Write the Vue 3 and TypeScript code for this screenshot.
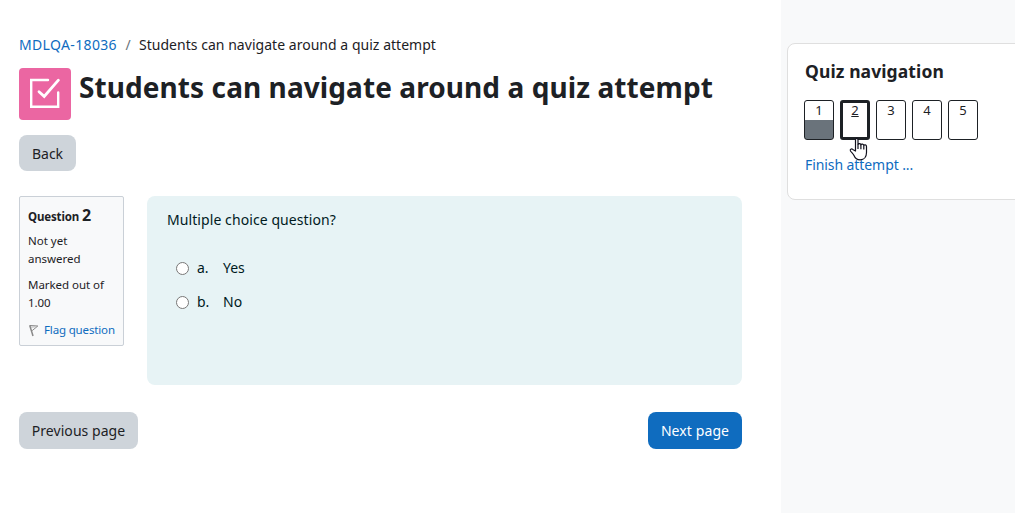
<script setup lang="ts">
import { ref } from "vue";

interface NavButton {
  number: number;
  answered: boolean;
}

const current = ref(2);
const selected = ref("");

const navButtons = ref<NavButton[]>([
  { number: 1, answered: true },
  { number: 2, answered: false },
  { number: 3, answered: false },
  { number: 4, answered: false },
  { number: 5, answered: false },
]);

const answers = [
  { letter: "a.", label: "Yes" },
  { letter: "b.", label: "No" },
];
</script>

<template>
  <div class="page">
    <main class="main">
      <nav class="breadcrumb">
        <a href="#" class="course">MDLQA-18036</a>
        <span class="divider">/</span>
        <span class="activity">Students can navigate around a quiz attempt</span>
      </nav>

      <header class="page-header">
        <div class="activity-icon">
          <svg width="52" height="52" viewBox="0 0 52 52" fill="none" stroke="#fff" stroke-width="2.4" stroke-linecap="round">
            <path d="M29 12H12.200v26.800h27V24.500" />
            <path d="M20 23.800l5.200 4.600L39.400 12.200" stroke-width="2.8" />
          </svg>
        </div>
        <h1>Students can navigate around a quiz attempt</h1>
      </header>

      <button class="btn btn-secondary back">Back</button>

      <div class="question">
        <aside class="info">
          <h3>Question <span class="qno">{{ current }}</span></h3>
          <div class="state">Not yet answered</div>
          <div class="grade">Marked out of 1.00</div>
          <a href="#" class="flag">
            <svg width="10" height="13" viewBox="0 0 10 13" fill="none" stroke="#888">
              <path d="M.7 1.200L4 12" stroke-width="1.500" />
              <path d="M1 1.500L8.800 2 3.200 6.600" />
              <path d="M2 3.200l4.500-.4" stroke="#bbb" />
            </svg>
            <span>Flag question</span>
          </a>
        </aside>

        <section class="formulation">
          <p class="qtext">Multiple choice question?</p>
          <label v-for="answer in answers" :key="answer.letter" class="answer">
            <input v-model="selected" type="radio" name="answer" :value="answer.letter" />
            <span class="letter">{{ answer.letter }}</span>
            <span>{{ answer.label }}</span>
          </label>
        </section>
      </div>

      <div class="submit-btns">
        <button class="btn btn-secondary prev">Previous page</button>
        <button class="btn btn-primary next">Next page</button>
      </div>
    </main>

    <aside class="drawer">
      <section class="block">
        <h2>Quiz navigation</h2>
        <div class="qn-buttons">
          <a
            v-for="button in navButtons"
            :key="button.number"
            href="#"
            class="qn-button"
            :class="{ answered: button.answered, current: button.number === current }"
          >
            <span>{{ button.number }}</span>
            <!-- Hand pointer over the current question -->
            <svg v-if="button.number === current" class="pointer" width="19" height="24" viewBox="0 0 19 24">
              <path
                d="M6.500 14V3C6.500.8 9 .8 9 3V7.500c.3-1.400 2.900-1.200 2.900.4.400-1.300 2.900-1 2.900.6.500-1.100 2.700-.8 2.700.9V15.500c0 4-2.300 7.300-6.300 7.300-3.500 0-5.200-1.800-6.200-4.300C4.200 16.500 2.500 15.500 1.500 14c-.9-1.700 1-2.700 2.300-1.600z"
                fill="#fff"
                stroke="#10101c"
                stroke-width="1.200"
                stroke-linejoin="round"
              />
              <path d="M9 7.500V12M11.900 8V12.200M14.800 8.700V12.500" fill="none" stroke="#10101c" stroke-width="1.200" />
            </svg>
          </a>
        </div>
        <a href="#" class="finish">Finish attempt ...</a>
      </section>
    </aside>
  </div>
</template>

<style>
body {
  background: #fff;
  overflow: hidden;
}
</style>

<style scoped>
.page {
  display: flex;
  width: 1015px;
  height: 513px;
  font-family: "Noto Sans", "Open Sans", sans-serif;
  font-size: 14px;
  line-height: 22px;
  color: #1d2125;
}

.page * {
  box-sizing: border-box;
}

a {
  color: #0f6cbf;
  text-decoration: none;
}

h1,
h2,
h3,
p {
  margin: 0;
}

.main {
  width: 781px;
  padding: 34px 39px 0 19px;
}

.breadcrumb {
  display: flex;
  height: 22px;
  white-space: nowrap;
}

.course {
  letter-spacing: 0.35px;
}

.divider {
  width: 22px;
  text-align: center;
  color: #6a737b;
}

.activity {
  letter-spacing: 0.03px;
}

.page-header {
  display: flex;
  margin-top: 12px;
}

.activity-icon {
  width: 52px;
  height: 52px;
  margin-right: 8px;
  border-radius: 4px;
  background: #eb66a2;
}

.activity-icon svg {
  display: block;
}

h1 {
  font-size: 28px;
  line-height: 39px;
  letter-spacing: 0.08px;
  white-space: nowrap;
}

.btn {
  height: 37px;
  padding: 0;
  border: 0;
  border-radius: 8px;
  font: inherit;
  text-align: center;
  cursor: pointer;
}

.btn-secondary {
  background: #ced4da;
  color: #1d2125;
}

.btn-primary {
  background: #0f6cbf;
  color: #fff;
}

.back {
  display: block;
  width: 57px;
  height: 36px;
  margin-top: 15px;
  padding-top: 1px;
}

.question {
  display: flex;
  gap: 23px;
  margin-top: 25px;
}

.info {
  width: 105px;
  height: 150px;
  padding: 7px 6px 7px 8px;
  border: 1px solid #cad0d7;
  border-radius: 2px;
  background: #f8f9fa;
  font-size: 11.500px;
  line-height: 18px;
}

.info h3 {
  height: 22px;
  font-size: 11.500px;
  line-height: 22px;
  letter-spacing: -0.15px;
  white-space: nowrap;
}

.qno {
  font-size: 16px;
}

.state {
  width: 60px;
  margin-top: 6px;
}

.grade {
  margin-top: 8px;
  letter-spacing: -0.05px;
}

.flag {
  display: flex;
  align-items: center;
  gap: 5px;
  margin: 9px 0 0 1px;
  letter-spacing: -0.15px;
  white-space: nowrap;
}

.flag svg {
  flex: none;
}

.formulation {
  flex: 1;
  height: 189px;
  padding: 13px 20px;
  border-radius: 8px;
  background: #e7f3f5;
  color: #001a1e;
}

.qtext {
  margin-bottom: 20px;
  letter-spacing: 0.08px;
}

.answer {
  display: flex;
  align-items: center;
  height: 34px;
}

.answer input {
  width: 13px;
  height: 13px;
  margin: 0 8px 0 9px;
}

.letter {
  width: 26px;
}

.submit-btns {
  display: flex;
  justify-content: space-between;
  margin-top: 27px;
}

.prev {
  width: 119px;
  letter-spacing: 0.05px;
}

.next {
  width: 94px;
  letter-spacing: 0.1px;
}

.drawer {
  flex: 1;
  padding: 43px 0 0 6px;
  background: #f8f9fa;
  overflow: hidden;
}

.block {
  width: 260px;
  height: 157px;
  padding: 14px 16px;
  border: 1px solid #dfdfdf;
  border-radius: 8px;
  background: #fff;
}

h2 {
  padding-left: 1px;
  font-size: 17.500px;
  line-height: 26px;
  letter-spacing: 0.1px;
}

.qn-buttons {
  display: flex;
  gap: 6px;
  margin-top: 16px;
}

.qn-button {
  position: relative;
  width: 30px;
  height: 40px;
  border: 1px solid #1d2125;
  border-radius: 3px;
  background: #fff;
  color: #1d2125;
  font-size: 13px;
  line-height: 19px;
  text-align: center;
}

.qn-button.answered {
  background: linear-gradient(#fff 19px, #6a737b 19px);
}

.qn-button.current {
  border-width: 3px;
  line-height: 15px;
}

.current span {
  text-decoration: underline;
}

.pointer {
  position: absolute;
  left: 6px;
  top: 34px;
  z-index: 1;
}

.finish {
  display: block;
  margin-top: 14px;
  padding-left: 1px;
  letter-spacing: -0.08px;
}
</style>
